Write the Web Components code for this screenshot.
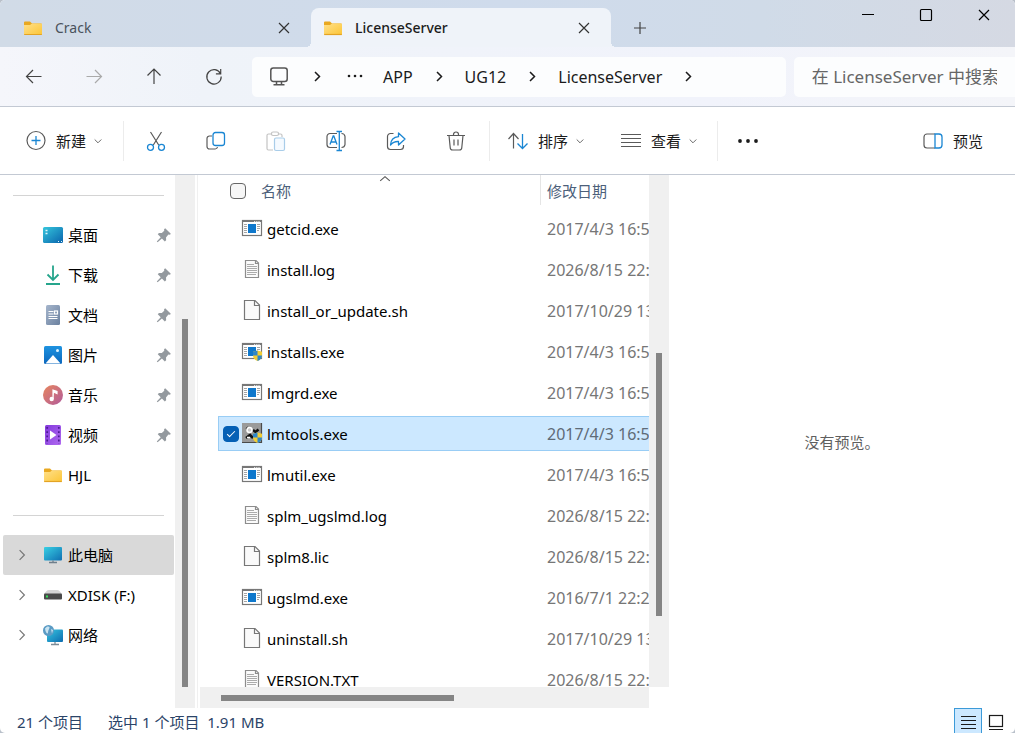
<!DOCTYPE html>
<html lang="zh-CN">
<head>
<meta charset="utf-8">
<title>LicenseServer</title>
<style>
  body {
    margin: 0;
    background: #b9c0ca;
    font-family: "Noto Sans", "Noto Sans CJK SC", sans-serif;
    font-size: 15px;
    color: #1b1b1b;
  }
</style>
</head>
<body>
<explorer-window>
  <title-bar slot="title">
    <explorer-tab label="Crack"></explorer-tab>
    <explorer-tab label="LicenseServer" active></explorer-tab>
  </title-bar>
  <address-bar slot="address" path="APP/UG12/LicenseServer"></address-bar>
  <command-bar slot="commands"></command-bar>
  <side-bar slot="sidebar">
    <side-separator></side-separator>
    <side-item icon="desktop" pinned>桌面</side-item>
    <side-item icon="download" pinned>下载</side-item>
    <side-item icon="document" pinned>文档</side-item>
    <side-item icon="picture" pinned>图片</side-item>
    <side-item icon="music" pinned>音乐</side-item>
    <side-item icon="video" pinned>视频</side-item>
    <side-item icon="folder">HJL</side-item>
    <side-separator></side-separator>
    <side-item icon="pc" expandable selected>此电脑</side-item>
    <side-item icon="disk" expandable>XDISK (F:)</side-item>
    <side-item icon="network" expandable>网络</side-item>
  </side-bar>
  <file-list slot="files"></file-list>
  <preview-pane slot="preview">没有预览。</preview-pane>
  <status-bar slot="status">
    <span>21 个项目</span>
    <span>选中 1 个项目&nbsp; 1.91 MB</span>
  </status-bar>
</explorer-window>

<script>
const ICONS = {
  folder: `<path d="M1 4.500a1 1 0 0 1 1-1h5l2 2h9.500v3H1z" fill="#e9a820"/><path d="M1 7h6l2-1.500h9a1 1 0 0 1 1 1V16a1 1 0 0 1-1 1H2a1 1 0 0 1-1-1z" fill="url(#g)"/><path d="M1.200 16.500h17.600" stroke="#e3a324"/><defs><linearGradient id="g" x2="1" y2="1"><stop stop-color="#ffe08a"/><stop offset="1" stop-color="#fcc536"/></linearGradient></defs>`,
  close: `<path d="M5 5l10 10M15 5L5 15" class="s"/>`,
  plus: `<path d="M10 4v12M4 10h12" class="s"/>`,
  minimize: `<path d="M4 9.500h12" class="s"/>`,
  maximize: `<rect x="4.500" y="4.500" width="11" height="11" rx="1" class="s"/>`,
  back: `<path d="M17.500 9.500h-15M9 3L2.500 9.500 9 16" class="s"/>`,
  forward: `<path d="M2.500 9.500h15M11 3l6.500 6.500L11 16" class="s"/>`,
  up: `<path d="M10 17v-15M3.500 8.500L10 2l6.500 6.500" class="s"/>`,
  refresh: `<path d="M16.500 6.700A7.200 7.200 0 1 0 17.200 9.500M16.700 2v4.800h-4.800" class="s"/>`,
  monitor: `<rect x="1.800" y="1" width="16.400" height="13.500" rx="2.500" class="s" stroke-width="1.500"/><path d="M7.500 14.500v3M12.500 14.500v3M4.500 17.800h11" class="s" stroke-width="1.500"/>`,
  chevron: `<path d="M8 5l4.500 4.500L8 14" class="s" stroke-width="1.500"/>`,
  expand: `<path d="M7 4l6 6-6 6" class="s" stroke-width="1.500"/>`,
  ellipsis: `<g fill="currentColor"><circle cx="4" cy="9" r="1.300"/><circle cx="10" cy="9" r="1.300"/><circle cx="16" cy="9" r="1.300"/></g>`,
  more: `<g fill="currentColor"><circle cx="2" cy="10" r="1.900"/><circle cx="10" cy="10" r="1.900"/><circle cx="18" cy="10" r="1.900"/></g>`,
  down: `<path d="M4.500 7.500L10 13l5.500-5.500" class="s" stroke-width="1.500"/>`,
  caret: `<path d="M2 13l8-7 8 7" class="s" stroke-width="1.800"/>`,
  add: `<circle cx="10" cy="9.500" r="9" class="s"/><path d="M10 5v9M5.500 9.500h9" class="b" stroke-width="1.500"/>`,
  cut: `<path d="M4.500 1l8.200 13M15.500 1L7.300 14" class="s"/><circle cx="4.500" cy="16.300" r="3" class="b"/><circle cx="15.500" cy="16.300" r="3" class="b"/>`,
  copy: `<path d="M6 5H3.500a2.500 2.500 0 0 0-2.500 2.500v8A2.500 2.500 0 0 0 3.500 18h5.500a2.500 2.500 0 0 0 2.500-2" class="s"/><rect x="7" y="1.500" width="11.500" height="13" rx="2.500" class="b"/>`,
  paste: `<path d="M6 3H2.500a1.500 1.500 0 0 0-1.500 1.500v13A1.500 1.500 0 0 0 2.500 19H7M12 3h2.500a1.500 1.500 0 0 1 1.500 1.500V6" class="s"/><rect x="5.500" y="1" width="7" height="3.500" rx="1.500" class="s"/><rect x="8.500" y="7" width="10" height="12.500" rx="1.500" stroke="#a9cde9" fill="#f5faff" stroke-width="1.200"/>`,
  rename: `<path d="M11 2.500H4A3 3 0 0 0 1 5.500v8a3 3 0 0 0 3 3h7M15.500 2.500a3.500 3.500 0 0 1 3.500 3v8a3.500 3.500 0 0 1-3.500 3" class="s"/><path d="M4 13.500L7.200 5h.6L11 13.500M5.200 11h4.600" class="b" stroke-width="1.500"/><path d="M13.300.5v19M10.500.5h5.500M10.500 19.500h5.500" class="b" stroke-width="1.500"/>`,
  share: `<path d="M7.500 2.500H4.500a3 3 0 0 0-3 3v10a3 3 0 0 0 3 3h10a3 3 0 0 0 3-3V14" class="s"/><path d="M12.500 2l6.500 6-6.500 6v-3.500c-3.500-.2-5.800.8-8 3.500.3-4.500 3-8 8-8.300z" class="b" stroke-linejoin="round"/>`,
  trash: `<path d="M1 4.500h18M7.500 4.500V3.500a2.500 2.500 0 0 1 5 0v1M3 4.500l1.200 12a2.500 2.500 0 0 0 2.500 2.500h6.600a2.500 2.500 0 0 0 2.500-2.500L17 4.500M8 8.500v6M12 8.500v6" class="s"/>`,
  sort: `<path d="M5.500 17.500V3M.5 8l5-5.500 5 5.500" class="s"/><path d="M14.500 3v14.500M9.500 12.500l5 5 5-5" class="b" stroke-width="1.500"/>`,
  view: `<path d="M0 3.500h20M0 7.500h20M0 11.500h20M0 15.500h20" class="s"/>`,
  preview: `<path d="M12 3h-8a3 3 0 0 0-3 3v8a3 3 0 0 0 3 3h8" class="s"/><path d="M12 3h4a3 3 0 0 1 3 3v8a3 3 0 0 1-3 3h-4z" class="b"/>`,
  pin: `<path d="M11.500 1.500l7 6.800-1 1.400-2-.2-3 3.500.2 3.500-1.700 1.500-3.600-3.700-5.400 4.900-1-1 4.900-5.500L2.200 9l1.500-1.500 3.600.1 3-3-.2-1.800z" fill="#949a9f"/>`,
  desktop: `<rect x="0" y="2" width="20" height="16" rx="1.500" fill="url(#g)"/><path d="M2.500 5.500h2M2.500 8.500h2" stroke="#dff6fc" stroke-width="1.500"/><path d="M15 16.500h1M18 16.500h1" stroke="#dff6fc"/><defs><linearGradient id="g" x2="1" y2="1"><stop stop-color="#35c6dc"/><stop offset="1" stop-color="#0a64ad"/></linearGradient></defs>`,
  download: `<path d="M10 .5v14M4.500 9.500l5.500 5.500 5.500-5.500M3 19h14" fill="none" stroke="#26a58c" stroke-width="1.800"/>`,
  document: `<rect x="3" y="0" width="14" height="20" rx="1.500" fill="url(#g)"/><path d="M5.500 6.500h5M5.500 9h5M5.500 11.500h9M5.500 13.500h9" stroke="#fff" stroke-width="1"/><rect x="11.500" y="6" width="3" height="3" stroke="#fff"/><defs><linearGradient id="g" x2="1" y2="1"><stop stop-color="#a5b5cc"/><stop offset="1" stop-color="#6b819f"/></linearGradient></defs>`,
  picture: `<rect x="1" y="1" width="18" height="18" rx="1.500" fill="url(#g)"/><path d="M2.500 18.500L10 10l7.500 8.500z" fill="#fff"/><circle cx="14.500" cy="5.500" r="1.500" fill="#e0f4ff"/><defs><linearGradient id="g" x2="0" y2="1"><stop stop-color="#1e93e0"/><stop offset="1" stop-color="#0b67bd"/></linearGradient></defs>`,
  music: `<circle cx="10" cy="10" r="10" fill="url(#g)"/><path d="M10 14V5l4 1.500v2L11 7.300" fill="#fff" stroke="#fff"/><circle cx="8.700" cy="14" r="2.200" fill="#fff"/><defs><linearGradient id="g" x2="1" y2="1"><stop stop-color="#e8865d"/><stop offset="1" stop-color="#b15b9c"/></linearGradient></defs>`,
  video: `<rect x="2" y="0" width="16" height="20" rx="1.500" fill="url(#g)"/><path d="M4.200 2v17M15.800 2v17" stroke="#4b1c92" stroke-width="1.700" stroke-dasharray="1.800 2.400"/><path d="M7 5.500l6.500 4.500L7 14.500z" fill="#fff"/><defs><linearGradient id="g" x2="1" y2="1"><stop stop-color="#8338dc"/><stop offset="1" stop-color="#b06bf0"/></linearGradient></defs>`,
  pc: `<rect x="1" y="2" width="18" height="13.500" rx="1" fill="url(#g)"/><path d="M10 15.500v2M6 17.500h8" stroke="#6f7f8c" stroke-width="1.300"/><defs><linearGradient id="g" x2="1" y2="1"><stop stop-color="#39d0e4"/><stop offset="1" stop-color="#0f6fb2"/></linearGradient></defs>`,
  disk: `<path d="M1 9.500c1.500-3 3-4.500 5-4.500h8c2 0 3.500 1.500 5 4.500z" fill="#d5d5d5"/><rect x="1" y="8.500" width="18" height="6" rx="1" fill="#4a4a4a"/><rect x="3" y="10.500" width="2" height="2" fill="#36e05a"/>`,
  network: `<rect x="4" y="4.500" width="16" height="12.500" rx="1" fill="url(#g)"/><path d="M12 17v2M8 19.500h8" stroke="#7c8c98" stroke-width="1.300"/><circle cx="5.500" cy="5.500" r="5.500" fill="#5b9bc4"/><path d="M2 3.500c1.500-2.500 4-2.500 4.500-1.500S5 5 5 7.500 2.500 8 2 3.500zM8 4l2 1-1 3.500z" fill="#c9e4f2"/><defs><linearGradient id="g" x2="1" y2="1"><stop stop-color="#37c6e0"/><stop offset="1" stop-color="#0d6cb0"/></linearGradient></defs>`,
  exe: `<rect x=".5" y="1.500" width="19" height="15" fill="#fff" stroke="#777"/><path d="M0 2h20" stroke="#777" stroke-width="2"/><path d="M12 2.500h6" stroke="#ddd" stroke-dasharray="1.200 1"/><path d="M2 5.500h3M2 7.500h3M2 9.500h3M2 11.500h3M2 13.500h3M15 5.500h3M15 7.500h3M15 9.500h3M15 11.500h2" stroke="#a5a5a5"/><rect x="6" y="5" width="8" height="9" fill="#0f78cc"/>`,
  text: `<path d="M3.500.5h10.500l2.500 2.500v14.500h-13z" fill="#fbfbfb" stroke="#8d8d8d"/><path d="M13.500.5V3.500h3" fill="none" stroke="#8d8d8d"/><path d="M5 4.500h7M5 6.500h10M5 8.500h10M5 10.500h10M5 12.500h10M5 14.500h9" stroke="#ababab"/>`,
  blank: `<path d="M2.500-.5h10.500l4.500 4.500v14.500h-15z" fill="#fafafa" stroke="#777"/><path d="M12.500-.5V4.500h5" fill="none" stroke="#777"/>`,
  tools: `<rect y="-1" width="20" height="20" fill="#9a9a9a"/><path d="M0 18.500h20M19.500-1v20" stroke="#4a4a4a"/><path d="M4.500 3.500l4 4M11 6l2.500 2 3-2.500M4 14l4-3 3 3" stroke="#111" stroke-width="2.500" fill="none"/><circle cx="7.500" cy="6" r="2.500" fill="#ccc" stroke="#fff" stroke-width="1.500"/><path d="M5 13.500h3" stroke="#fff" stroke-width="1.500"/>`,
  details: `<path d="M3 5.500h15M3 9.500h15M3 13.500h15M3 17.500h15" stroke="#1b1b1b" fill="none"/>`,
  tiles: `<rect x="3.500" y="4.500" width="13" height="11" fill="#fff" stroke="#1b1b1b"/><path d="M3 18.500h14" stroke="#1b1b1b"/>`
}

// UAC shield drawn over the lower right corner
const SHIELD = `<path d="M15.500 8.500l4.500 1.300v3.500c0 3-2 4.700-4.500 5.700-2.500-1-4.500-2.700-4.500-5.700v-3.500z" fill="#f2cd34"/><path d="M15.500 8.500v5H11v-3.700zM15.500 13.500H20c0 3-2 4.500-4.500 5.500z" fill="#2f86c8"/>`
ICONS.admin = ICONS.exe + SHIELD
ICONS.tools += SHIELD

class UiIcon extends HTMLElement {
  connectedCallback() {
    const size = this.getAttribute('size') || 20
    this.attachShadow({ mode: 'open' }).innerHTML = `
      <style>
        :host { display: inline-flex; flex: none; }
        svg { display: block; overflow: visible; }
        .s { fill: none; stroke: currentColor; }
        .b { fill: none; stroke: #1a86d3; stroke-width: 1.300; }
      </style>
      <svg width="${size}" height="${size}" viewBox="0 0 20 20" fill="none" stroke-width="1.200" aria-hidden="true">${ICONS[this.getAttribute('name')]}</svg>
    `
  }
}

const BUTTON_CSS = `
  button {
    display: flex;
    align-items: center;
    justify-content: center;
    padding: 0;
    border: 0;
    background: none;
    color: inherit;
    font: inherit;
  }
`

class ExplorerWindow extends HTMLElement {
  constructor() {
    super()
    this.attachShadow({ mode: 'open' })
    this.shadowRoot.innerHTML = `
      <style>
        :host {
          display: flex;
          flex-direction: column;
          height: 100vh;
          background: #fff;
          border-radius: 5px;
          overflow: hidden;
        }
        main {
          flex: 1;
          min-height: 0;
          display: grid;
          grid-template-columns: 195px minmax(0, 474fr) minmax(0, 346fr);
          grid-template-rows: minmax(0, 1fr);
        }
      </style>
      <slot name="title"></slot>
      <slot name="address"></slot>
      <slot name="commands"></slot>
      <main>
        <slot name="sidebar"></slot>
        <slot name="files"></slot>
        <slot name="preview"></slot>
      </main>
      <slot name="status"></slot>
    `
  }
}

class TitleBar extends HTMLElement {
  constructor() {
    super()
    this.attachShadow({ mode: 'open' })
    this.shadowRoot.innerHTML = `
      <style>
        ${BUTTON_CSS}
        :host {
          display: flex;
          height: 47px;
          padding-left: 11px;
          background: linear-gradient(90deg, #d1dbe7, #cfdbec 50%, #d0dbe8 75%, #d5d9e3);
        }
        .tabs { display: flex; padding-top: 8px; }
        .new { width: 58px; color: #444; }
        .controls { display: flex; margin-left: auto; padding-right: 2px; color: #000; }
        .controls button { width: 58px; height: 30px; }
      </style>
      <div class="tabs">
        <slot></slot>
        <button class="new" aria-label="新标签页"><ui-icon name="plus"></ui-icon></button>
      </div>
      <div class="controls">
        <button aria-label="最小化"><ui-icon name="minimize"></ui-icon></button>
        <button aria-label="最大化"><ui-icon name="maximize"></ui-icon></button>
        <button aria-label="关闭"><ui-icon name="close"></ui-icon></button>
      </div>
    `
  }
}

class ExplorerTab extends HTMLElement {
  connectedCallback() {
    this.attachShadow({ mode: 'open' }).innerHTML = `
      <style>
        ${BUTTON_CSS}
        :host {
          display: flex;
          position: relative;
          box-sizing: border-box;
          width: 300px;
          padding: 0 12px;
          font-size: 14px;
          color: #4a525c;
        }
        :host([active]) {
          background: #eff3f9;
          border-radius: 8px 8px 0 0;
          font-weight: 500;
          color: #1b1b1b;
        }
        :host([active])::before,
        :host([active])::after {
          content: "";
          position: absolute;
          bottom: 0;
          left: -5px;
          width: 5px;
          height: 5px;
          background: radial-gradient(circle at 0 0, transparent 5px, #eff3f9 5px);
        }
        :host([active])::after {
          left: 100%;
          background: radial-gradient(circle at 100% 0, transparent 5px, #eff3f9 5px);
        }
        .label { flex: 1; justify-content: flex-start; gap: 12px; }
        .close { width: 30px; color: #333; }
      </style>
      <button class="label"><ui-icon name="folder"></ui-icon>${this.getAttribute('label')}</button>
      <button class="close" aria-label="关闭标签页"><ui-icon name="close"></ui-icon></button>
    `
  }
}

class AddressBar extends HTMLElement {
  connectedCallback() {
    const crumbs = this.getAttribute('path').split('/')
      .map((name) => `<a href="#">${name}</a><ui-icon class="sep" name="chevron"></ui-icon>`)
      .join('')
    this.attachShadow({ mode: 'open' }).innerHTML = `
      <style>
        ${BUTTON_CSS}
        :host {
          display: grid;
          grid-template-columns: auto minmax(0, 533fr) minmax(0, 221fr);
          column-gap: 8px;
          align-items: center;
          height: 59px;
          padding-left: 4px;
          border-bottom: 1px solid #c3c9d3;
          background: linear-gradient(90deg, #f5f6fb, #eff3f9 20%, #f1f3fb 70%, #f4f5f9);
          font-size: 16px;
        }
        .nav { display: flex; color: #444; }
        .nav button { width: 60px; height: 40px; }
        .nav button:disabled { color: #aaa; }
        nav, input {
          box-sizing: border-box;
          height: 40px;
          background: #fcfdfe;
          border-radius: 5px;
        }
        nav {
          display: flex;
          align-items: center;
          padding-left: 15px;
        }
        nav button { width: 24px; height: 24px; }
        .place { color: #555; }
        .sep { width: 52px; justify-content: center; }
        .rest { margin-right: 16px; }
        a { color: inherit; text-decoration: none; line-height: 20px; }
        input {
          width: 100%;
          padding: 0 18px;
          border: 0;
          font: inherit;
          font-size: 17px;
          border-radius: 5px 0 0 5px;
        }
        input::placeholder { color: #666; opacity: 1; }
      </style>
      <div class="nav">
        <button aria-label="后退"><ui-icon name="back"></ui-icon></button>
        <button aria-label="前进" disabled><ui-icon name="forward"></ui-icon></button>
        <button aria-label="上移"><ui-icon name="up"></ui-icon></button>
        <button aria-label="刷新"><ui-icon name="refresh"></ui-icon></button>
      </div>
      <nav>
        <button class="place" aria-label="此电脑"><ui-icon name="monitor"></ui-icon></button>
        <ui-icon class="sep" name="chevron"></ui-icon>
        <button class="rest" aria-label="更多"><ui-icon name="ellipsis"></ui-icon></button>
        ${crumbs}
      </nav>
      <input type="text" aria-label="搜索" placeholder="在 LicenseServer 中搜索">
    `
  }
}

class CommandBar extends HTMLElement {
  constructor() {
    super()
    this.attachShadow({ mode: 'open' })
    this.shadowRoot.innerHTML = `
      <style>
        ${BUTTON_CSS}
        :host {
          display: flex;
          align-items: center;
          height: 67px;
          padding-left: 8px;
          border-bottom: 1px solid #c3c9d3;
        }
        button { height: 40px; color: #5a5a5a; }
        button span { color: #1b1b1b; margin: 0 6px 0 10px; }
        .menu { padding: 0 19px 0 18px; }
        .view { padding: 0 18px 0 16px; }
        .tool { width: 60px; }
        .more { color: #1b1b1b; }
        .off { color: #c4c4c4; }
        .preview { margin-left: auto; padding-right: 26px; }
        hr { width: 1px; height: 40px; margin: 0; border: 0; background: #ececec; }
        .tools { display: flex; margin: 0 3px 0 2px; }
      </style>
      <button class="menu"><ui-icon name="add"></ui-icon><span>新建</span><ui-icon name="down" size="12"></ui-icon></button>
      <hr>
      <div class="tools">
        <button class="tool" aria-label="剪切"><ui-icon name="cut"></ui-icon></button>
        <button class="tool" aria-label="复制"><ui-icon name="copy"></ui-icon></button>
        <button class="tool off" aria-label="粘贴" disabled><ui-icon name="paste"></ui-icon></button>
        <button class="tool" aria-label="重命名"><ui-icon name="rename"></ui-icon></button>
        <button class="tool" aria-label="共享"><ui-icon name="share"></ui-icon></button>
        <button class="tool" aria-label="删除"><ui-icon name="trash"></ui-icon></button>
      </div>
      <hr>
      <button class="menu"><ui-icon name="sort"></ui-icon><span>排序</span><ui-icon name="down" size="12"></ui-icon></button>
      <button class="menu view"><ui-icon name="view"></ui-icon><span>查看</span><ui-icon name="down" size="12"></ui-icon></button>
      <hr>
      <button class="tool more" aria-label="查看更多"><ui-icon name="more"></ui-icon></button>
      <button class="preview"><ui-icon name="preview"></ui-icon><span>预览</span></button>
    `
  }
}

// range="before thumb after", shares of the track length
class ScrollTrack extends HTMLElement {
  connectedCallback() {
    const [before, thumb, after] = this.getAttribute('range').split(' ')
    this.attachShadow({ mode: 'open' }).innerHTML = `
      <style>
        :host {
          display: flex;
          flex-direction: column;
          align-items: center;
          background: #f0f0f0;
        }
        :host([horizontal]) { flex-direction: row; }
        i { flex: ${before}; }
        i:last-child { flex: ${after}; }
        b { flex: ${thumb}; width: 6px; background: #858585; }
        :host([horizontal]) b { width: auto; height: 6px; }
      </style>
      <i></i><b></b><i></i>
    `
  }
}

class SideBar extends HTMLElement {
  constructor() {
    super()
    this.attachShadow({ mode: 'open' })
    this.shadowRoot.innerHTML = `
      <style>
        :host { display: flex; }
        nav { flex: 1; overflow: hidden; padding: 0 1px 0 3px; }
        scroll-track { width: 20px; }
      </style>
      <nav><slot></slot></nav>
      <scroll-track range="144 368 21"></scroll-track>
    `
  }
}

class SideSeparator extends HTMLElement {
  constructor() {
    super()
    this.attachShadow({ mode: 'open' })
    this.shadowRoot.innerHTML = `
      <style>
        :host { display: block; padding: 20px 10px 19px; }
        hr { height: 1px; margin: 0; border: 0; background: #d4d4d4; }
      </style>
      <hr>
    `
  }
}

class SideItem extends HTMLElement {
  connectedCallback() {
    const toggle = this.hasAttribute('expandable')
      ? '<button aria-label="展开"><ui-icon name="expand" size="16"></ui-icon></button>'
      : ''
    const pin = this.hasAttribute('pinned') ? '<ui-icon name="pin" size="16"></ui-icon>' : ''
    this.attachShadow({ mode: 'open' }).innerHTML = `
      <style>
        ${BUTTON_CSS}
        :host {
          display: grid;
          grid-template-columns: 40px 1fr auto;
          align-items: center;
          height: 40px;
          padding-right: 2px;
          border-radius: 2px;
          color: #000;
        }
        :host([selected]) { background: #d9d9d9; }
        button { grid-column: 1; width: 38px; height: 40px; color: #777; }
        a {
          grid-column: 2;
          display: flex;
          align-items: center;
          gap: 5px;
          line-height: 20px;
          color: inherit;
          text-decoration: none;
          white-space: nowrap;
        }
      </style>
      ${toggle}
      <a href="#"><ui-icon name="${this.getAttribute('icon')}"></ui-icon><span><slot></slot></span></a>
      ${pin}
    `
  }
}

const FILES = [
  ['exe', 'getcid.exe', '2017/4/3 16:5'],
  ['text', 'install.log', '2026/8/15 22:'],
  ['blank', 'install_or_update.sh', '2017/10/29 13'],
  ['admin', 'installs.exe', '2017/4/3 16:5'],
  ['exe', 'lmgrd.exe', '2017/4/3 16:5'],
  ['tools', 'lmtools.exe', '2017/4/3 16:5', true],
  ['exe', 'lmutil.exe', '2017/4/3 16:5'],
  ['text', 'splm_ugslmd.log', '2026/8/15 22:'],
  ['blank', 'splm8.lic', '2026/8/15 22:'],
  ['exe', 'ugslmd.exe', '2016/7/1 22:2'],
  ['blank', 'uninstall.sh', '2017/10/29 13'],
  ['text', 'VERSION.TXT', '2026/8/15 22:']
]

class FileList extends HTMLElement {
  constructor() {
    super()
    this.attachShadow({ mode: 'open' })
    const rows = FILES.map(([icon, name, date, selected]) => `
      <tr${selected ? ' class="selected"' : ''}>
        <td>
          <div class="name">
            <input type="checkbox" aria-label="${name}"${selected ? ' checked' : ''}>
            <ui-icon name="${icon}"></ui-icon>
            <span>${name}</span>
          </div>
        </td>
        <td class="date">${date}</td>
      </tr>`).join('')
    this.shadowRoot.innerHTML = `
      <style>
        :host {
          display: grid;
          grid-template-columns: minmax(0, 1fr) 20px;
          grid-template-rows: minmax(0, 1fr) 21px;
          margin-left: 2px;
          border-left: 1px solid #f0f0f0;
        }
        .list { overflow: hidden; padding-left: 20px; }
        table {
          table-layout: fixed;
          width: 520px;
          margin-top: -6px;
          border-spacing: 0 6px;
        }
        th, td { padding: 0; text-align: left; white-space: nowrap; line-height: 20px; }
        th {
          box-sizing: border-box;
          height: 30px;
          padding-top: 2px;
          font-weight: 400;
          color: #4c607a;
          position: relative;
        }
        tbody { color: #000; }
        td { box-sizing: border-box; height: 35px; border: 1px solid transparent; }
        td:first-child { border-right: 0; padding-left: 4px; }
        td.date { border-left: 0; padding-left: 7px; font-size: 16px; color: #767676; }
        .selected td.date { color: #5f6b77; }
        .col-name { width: 322px; }
        th.date { border-left: 1px solid #e5e5e5; padding-left: 6px; }
        .name { display: flex; align-items: center; }
        .name span { margin-left: 5px; }
        .head { display: flex; align-items: center; gap: 15px; padding-left: 12px; }
        .caret { position: absolute; top: -2px; left: 50%; color: #555; }
        input {
          appearance: none;
          box-sizing: border-box;
          width: 16px;
          height: 16px;
          margin: 0;
          border: 1px solid #666;
          border-radius: 4px;
          background: #f6f6f6;
        }
        td input { visibility: hidden; margin-right: 3px; }
        .selected input {
          visibility: visible;
          display: grid;
          place-items: center;
          border-color: #0560b5;
          background: #0560b5;
        }
        .selected input::before {
          content: "";
          width: 7px;
          height: 3px;
          margin-bottom: 2px;
          border: solid #fff;
          border-width: 0 0 1px 1px;
          transform: rotate(-45deg);
        }
        .selected td { background: #cce8ff; border-color: #99cdf5; }
        .across { margin-left: 2px; }
      </style>
      <div class="list">
        <table>
          <thead>
            <tr>
              <th class="col-name">
                <div class="head"><input type="checkbox" id="all"><label for="all">名称</label></div>
                <ui-icon class="caret" name="caret" size="12"></ui-icon>
              </th>
              <th class="date">修改日期</th>
            </tr>
          </thead>
          <tbody>${rows}</tbody>
        </table>
      </div>
      <scroll-track range="178 263 71"></scroll-track>
      <scroll-track class="across" horizontal range="21 232 195"></scroll-track>
    `
  }
}

class PreviewPane extends HTMLElement {
  constructor() {
    super()
    this.attachShadow({ mode: 'open' })
    this.shadowRoot.innerHTML = `
      <style>
        :host { display: grid; place-items: center; line-height: 20px; color: #5f5f5f; }
      </style>
      <span><slot></slot></span>
    `
  }
}

class StatusBar extends HTMLElement {
  constructor() {
    super()
    this.attachShadow({ mode: 'open' })
    this.shadowRoot.innerHTML = `
      <style>
        ${BUTTON_CSS}
        :host {
          display: flex;
          align-items: center;
          gap: 25px;
          height: 25px;
          padding: 0 5px 0 17px;
          color: #2b4468;
        }
        ::slotted(span) { padding-top: 4px; white-space: nowrap; line-height: 21px; }
        .views { display: flex; align-self: stretch; margin-left: auto; }
        .views button { width: 28px; box-sizing: border-box; }
        .views .on { background: #cce8ff; border: 1px solid #3c9ad8; border-bottom: 0; }
      </style>
      <slot></slot>
      <div class="views">
        <button class="on" aria-label="详细信息"><ui-icon name="details"></ui-icon></button>
        <button aria-label="大缩略图"><ui-icon name="tiles"></ui-icon></button>
      </div>
    `
  }
}

customElements.define('ui-icon', UiIcon)
customElements.define('scroll-track', ScrollTrack)
customElements.define('explorer-tab', ExplorerTab)
customElements.define('title-bar', TitleBar)
customElements.define('address-bar', AddressBar)
customElements.define('command-bar', CommandBar)
customElements.define('side-separator', SideSeparator)
customElements.define('side-item', SideItem)
customElements.define('side-bar', SideBar)
customElements.define('file-list', FileList)
customElements.define('preview-pane', PreviewPane)
customElements.define('status-bar', StatusBar)
customElements.define('explorer-window', ExplorerWindow)
</script>
</body>
</html>
